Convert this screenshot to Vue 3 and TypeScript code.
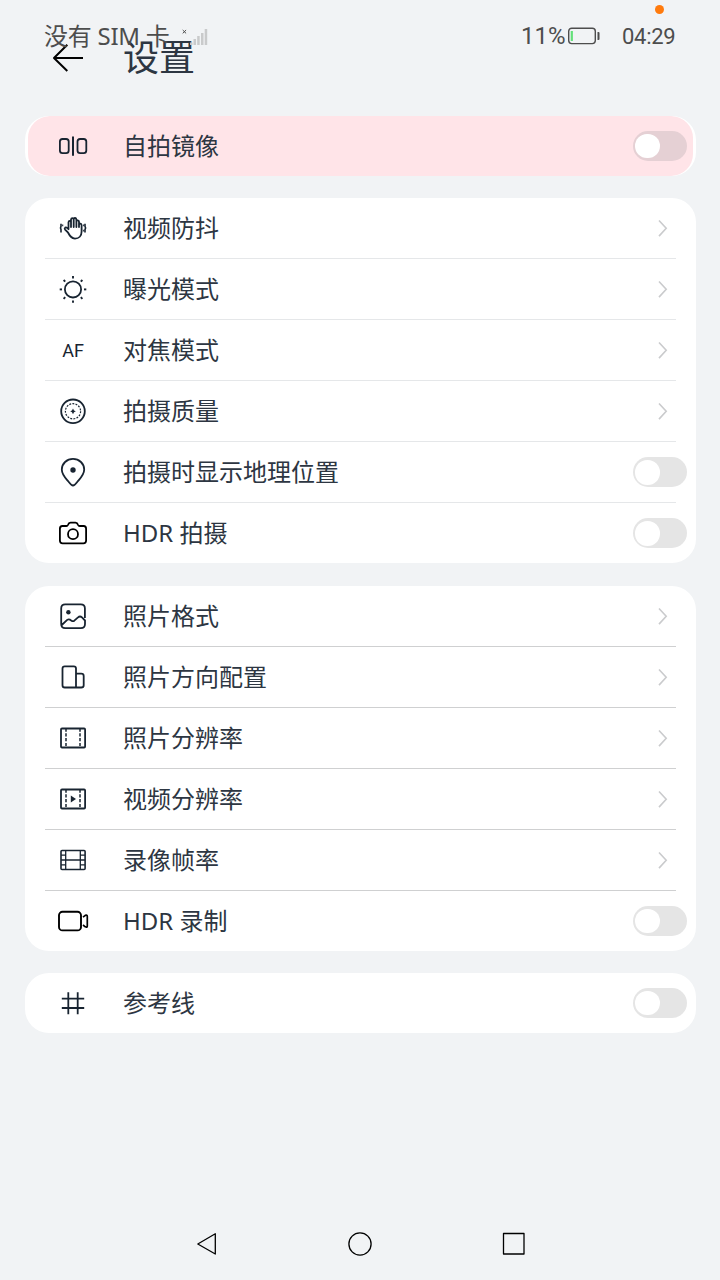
<script setup lang="ts">
type IconName =
  | 'mirror' | 'hand' | 'sun' | 'af' | 'quality' | 'pin' | 'camera'
  | 'photo' | 'orient' | 'film' | 'video' | 'rate' | 'record' | 'grid'

interface Item {
  label: string
  icon: IconName
  toggle?: boolean
}

interface Group {
  tone: string
  items: Item[]
}

const groups: Group[] = [
  { tone: 'active', items: [{ label: '自拍镜像', icon: 'mirror', toggle: true }] },
  {
    tone: 'light',
    items: [
      { label: '视频防抖', icon: 'hand' },
      { label: '曝光模式', icon: 'sun' },
      { label: '对焦模式', icon: 'af' },
      { label: '拍摄质量', icon: 'quality' },
      { label: '拍摄时显示地理位置', icon: 'pin', toggle: true },
      { label: 'HDR 拍摄', icon: 'camera', toggle: true },
    ],
  },
  {
    tone: 'dark',
    items: [
      { label: '照片格式', icon: 'photo' },
      { label: '照片方向配置', icon: 'orient' },
      { label: '照片分辨率', icon: 'film' },
      { label: '视频分辨率', icon: 'video' },
      { label: '录像帧率', icon: 'rate' },
      { label: 'HDR 录制', icon: 'record', toggle: true },
    ],
  },
  { tone: 'light', items: [{ label: '参考线', icon: 'grid', toggle: true }] },
]

const rays: number[] = [0, 45, 90, 135, 180, 225, 270, 315]
</script>

<template>
  <div class="screen">
    <div class="status">
      <span class="carrier">没有 SIM 卡</span>
      <svg class="signal" width="28" height="24" viewBox="0 0 28 24">
        <path d="M2.7 5l3.4 3.4M6.1 5L2.7 8.4" stroke="#4d4d4d" stroke-width="1" />
        <g fill="#c9cacb">
          <rect x="10" y="17.5" width="2.5" height="2.5" />
          <rect x="13.5" y="14" width="2.5" height="6" />
          <rect x="17.2" y="11" width="2.5" height="9" />
          <rect x="21" y="8" width="2.5" height="12" />
          <rect x="24.7" y="4" width="2.5" height="16" />
        </g>
      </svg>
      <span class="battery-text">11%</span>
      <svg class="battery" width="34" height="18" viewBox="0 0 34 18">
        <rect x="1.7" y="1.2" width="26.6" height="15.4" rx="3" fill="none" stroke="#4d4d4d" stroke-width="1.4" />
        <rect x="3.7" y="4" width="2.2" height="10" fill="#64e07a" />
        <path d="M30.5 5h1q1 0 1 1v6q0 1-1 1h-1z" fill="#4d4d4d" />
      </svg>
      <span class="clock">04:29</span>
      <i class="privacy-dot"></i>
    </div>

    <header class="header">
      <svg class="back" width="34" height="32" viewBox="0 0 34 32">
        <path d="M32 16H3M16.3 2.8L3 16l13.3 13" fill="none" stroke="#000" stroke-width="2" stroke-linejoin="round" />
      </svg>
      <h1>设置</h1>
    </header>

    <main class="groups">
      <section v-for="(group, gi) in groups" :key="gi" class="card" :class="group.tone">
        <div v-for="item in group.items" :key="item.label" class="row">
          <svg class="icon" width="36" height="36" viewBox="-18 -18 36 36">
            <g v-if="item.icon === 'mirror'">
              <rect x="-13.1" y="-7" width="8.8" height="14.2" rx="2.6" />
              <rect x="4.5" y="-7" width="8.8" height="14.2" rx="2.6" />
              <path d="M0-9.5V9.8" stroke-width="2" />
            </g>
            <g v-else-if="item.icon === 'hand'">
              <path d="M-4.9 4.7L-7.9 1.6Q-8.8.4-7.8-.4Q-6.9-1-5.9-.1L-4.5 1.2V-5.6Q-4.4-7.2-3.2-7.2T-2-5.6V-1V-8.4Q-1.8-9.8-.6-9.8T.7-8.4V-1V-8.6Q.9-10.2 2.1-10T3.4-8.4V-1V-6.4Q3.6-7.8 4.8-7.6T6-6.2V-1V-3Q6.3-4.5 7.4-4.3T8.6-2.8V3.4C8.6 8 5.8 10.6 2 10.6C-1.6 10.6-3 8.1-4.9 4.7Z" stroke-width="1.8" />
              <path d="M-12-4.3v2.6l-.5 1.7l.5 1.6v3M12-4.3v2.6l.6 1.7l-.6 1.6v3" stroke-width="1.6" />
              <path d="M-10.3-3.6v1.9M10.7-3.6v1.8M10.7 1.8v1.8" stroke-width="1.1" />
            </g>
            <g v-else-if="item.icon === 'sun'">
              <circle r="8.1" cy=".4" stroke-width="1.8" />
              <path v-for="angle in rays" :key="angle" d="M11 0h2.3" stroke-width="1.9" :transform="`translate(0 .4) rotate(${angle})`" />
            </g>
            <text v-else-if="item.icon === 'af'" x="0" y="6.7" text-anchor="middle">AF</text>
            <g v-else-if="item.icon === 'quality'">
              <circle r="11.8" cy=".3" stroke-width="1.8" />
              <circle r="7.6" cy=".3" stroke-width="1.2" stroke-dasharray="1.9 1.28" />
              <path class="solid" d="M0-2.6Q.6-.3 2.8.3Q.6.9 0 3.2Q-.6.9-2.8.3Q-.6-.3 0-2.6Z" />
            </g>
            <g v-else-if="item.icon === 'pin'">
              <path d="M0 13.5C-1.7 13.5-2.8 11.8-4.6 9.5C-8 5.4-11.2 2.3-11.2-2.6A11.2 10.5 0 0 1 11.2-2.6C11.2 2.3 8 5.4 4.6 9.5C2.8 11.8 1.7 13.5 0 13.5Z" />
              <circle class="solid" cy="-2" r="2.7" />
            </g>
            <g v-else-if="item.icon === 'camera'" class="black">
              <path d="M-10.6-7H-6.6Q-5.5-7-5.1-8Q-4.3-10.4-2.5-10.4H2.5Q4.3-10.4 5.1-8Q5.5-7 6.6-7H10.6Q13.1-7 13.1-4.3V7.5Q13.1 10.3 10.4 10.3H-10.4Q-13.1 10.3-13.1 7.5V-4.3Q-13.1-7-10.6-7Z" stroke-width="1.8" />
              <circle cy="1.2" r="5" stroke-width="1.8" />
            </g>
            <g v-else-if="item.icon === 'photo'">
              <path d="M11.9 2V-7.5Q11.9-11.7 7.8-11.7H-7.8Q-11.8-11.7-11.8-7.5V8Q-11.8 12.1-7.8 12.1H7.8Q12 12.1 12 8V4.5L9 1.4Q7-.5 5 1.4L1.3 4.7Q0 5.7-1.5 4.7L-3.2 3.6Q-4.5 2.9-5.8 3.9L-11.2 9" />
              <circle class="solid" cx="-4.6" cy="-3.8" r="2.2" />
            </g>
            <g v-else-if="item.icon === 'orient'">
              <path d="M3-8.5Q3-10.7.8-10.7H-8.2Q-10.5-10.7-10.5-8.5V8.2Q-10.5 10.5-8.2 10.5H8.2Q10.7 10.5 10.7 8.2V-1Q10.7-3.3 8.2-3.3H3ZM3-4V10.5" />
            </g>
            <g v-else-if="item.icon === 'film' || item.icon === 'video'">
              <rect x="-12" y="-9.5" width="24.1" height="19" rx="1" stroke-width="1.8" />
              <path d="M-7-9.5V10M7-9.5V10" stroke-width="1.5" stroke-dasharray="3.2 1.6" />
              <path v-if="item.icon === 'video'" class="solid" d="M-2.2-3.5L3 0L-2.2 3.5Z" />
            </g>
            <g v-else-if="item.icon === 'rate'">
              <rect x="-12" y="-9.5" width="24.1" height="19" rx="1" stroke-width="1.6" />
              <path d="M-7.3-9.5V9.5M7.3-9.5V9.5M-12 0H12M-12-4.8h4.7M-12 4.8h4.7M7.3-4.8H12M7.3 4.8H12" stroke-width="1.3" />
            </g>
            <g v-else-if="item.icon === 'record'" class="black">
              <rect x="-14" y="-9.2" width="22" height="18.6" rx="3.5" stroke-width="1.9" />
              <path d="M10-3.8L12.3-5.6Q14.3-6.5 14.3-4.5V5Q14.3 6.8 12.3 5.8L10 4" stroke-width="1.7" />
            </g>
            <g v-else>
              <path d="M-4.7-10.7V11.2M4.7-10.7V11.2M-11.2-4.3H11.2M-11.2 5H11.2" />
            </g>
          </svg>
          <span class="label">{{ item.label }}</span>
          <span v-if="item.toggle" class="switch"><i></i></span>
          <svg v-else class="chevron" width="12" height="20" viewBox="0 0 12 20">
            <path d="M2 2.5L9.2 10.3L2 18.1" fill="none" stroke="#cacbcd" stroke-width="1.6" />
          </svg>
        </div>
      </section>
    </main>

    <nav class="nav">
      <svg width="24" height="26" viewBox="0 0 24 26"><path d="M20.3 2.8V23L2.8 13Z" /></svg>
      <svg width="26" height="26" viewBox="0 0 26 26"><circle cx="13" cy="13" r="11.1" /></svg>
      <svg width="26" height="26" viewBox="0 0 26 26"><rect x="2.5" y="2.5" width="20.5" height="20.5" /></svg>
    </nav>
  </div>
</template>

<style>
body {
  background: #f1f3f5;
}
</style>

<style scoped>
.screen {
  position: relative;
  display: flex;
  flex-direction: column;
  width: 720px;
  height: 1280px;
  overflow: hidden;
  background: #f1f3f5;
  font-family: "Noto Sans", "Noto Sans CJK SC", sans-serif;
  color: #2d3642;
}
.status {
  position: absolute;
  inset: 0 0 auto 0;
  display: flex;
  align-items: center;
  height: 72px;
  padding: 0 45px 0 44px;
  box-sizing: border-box;
  color: #4d4d4d;
  white-space: nowrap;
}
.carrier {
  font-size: 24px;
  line-height: 36px;
  width: 137px;
  letter-spacing: -0.25px;
}
.signal {
  margin: 2px 0 0 -1px;
}
.battery-text {
  margin-left: auto;
  font: 24px Roboto, sans-serif;
}
.battery {
  margin-left: 1px;
}
.clock {
  width: 53px;
  margin-left: 21.5px;
  font: 22px Roboto, sans-serif;
  letter-spacing: -0.3px;
}
.privacy-dot {
  position: absolute;
  left: 655px;
  top: 5px;
  width: 9px;
  height: 9px;
  border-radius: 50%;
  background: #ff7a0d;
}
.header {
  display: flex;
  align-items: center;
  height: 116px;
  padding-left: 51px;
}
.back {
  flex: none;
}
h1 {
  margin: 0 0 0 38px;
  font-size: 36px;
  line-height: 52px;
  font-weight: 400;
}
.groups {
  display: flex;
  flex-direction: column;
  gap: 22.4px;
  padding: 0 24.5px 0 25px;
}
.card {
  border-radius: 24px;
  background: #fff;
  overflow: hidden;
}
.row {
  position: relative;
  display: flex;
  align-items: center;
  height: 60px;
  padding: 0 9px 0 30px;
}
.row + .row {
  margin-top: 1px;
}
.row + .row::before {
  content: "";
  position: absolute;
  left: 20px;
  right: 20px;
  top: -1px;
  height: 1px;
  background: #e5e7e9;
}
.dark .row + .row::before {
  background: #cfd0d1;
}
.active .row {
  margin: 0 3px;
  padding: 0 6px 0 27px;
  border-radius: 22px;
  background: #ffe4e8;
}
.icon {
  flex: none;
  fill: none;
  stroke: #182431;
  stroke-width: 1.8;
  stroke-linecap: butt;
  stroke-linejoin: round;
}
.icon .black {
  stroke: #000;
}
.icon .solid {
  fill: #182431;
  stroke: none;
}
.icon text {
  fill: #182431;
  stroke: none;
  font: 18px Roboto, sans-serif;
}
.label {
  margin-left: 32px;
  font-size: 24px;
  line-height: 36px;
  white-space: nowrap;
}
.switch {
  width: 54px;
  height: 30px;
  margin-left: auto;
  border-radius: 15px;
  background: #e5e5e5;
}
.active .switch {
  background: #e5d0d4;
}
.switch i {
  display: block;
  width: 24.5px;
  height: 24.5px;
  margin: 2.75px;
  border-radius: 50%;
  background: #fff;
}
.chevron {
  margin: 0 18px 0 auto;
}
.nav {
  display: flex;
  align-items: center;
  justify-content: space-between;
  height: 72px;
  margin-top: auto;
  padding: 0 193px 0 195px;
  fill: none;
  stroke: #000;
  stroke-width: 1.3;
  stroke-linejoin: round;
}
</style>
